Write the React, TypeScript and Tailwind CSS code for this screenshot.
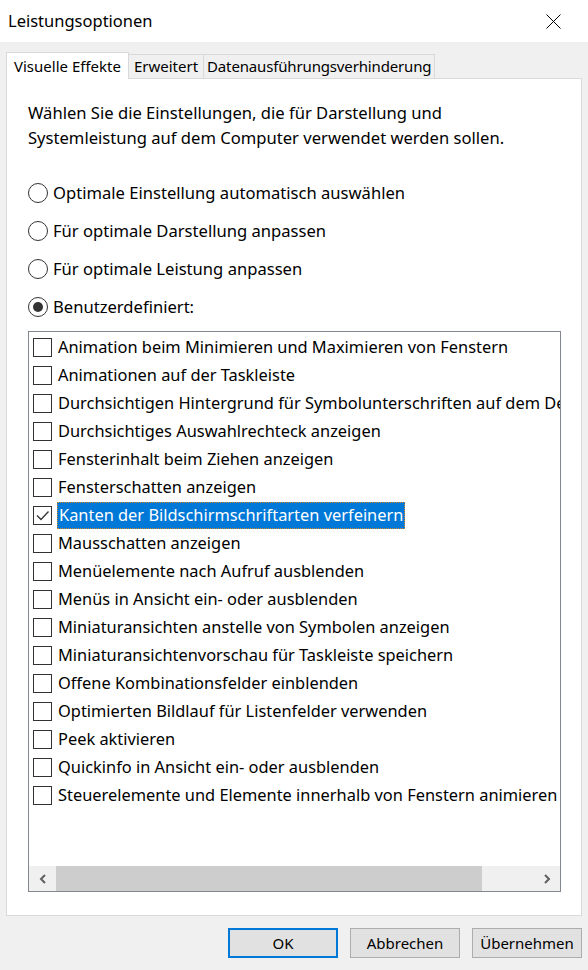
import React from 'react';

const effects: string[] = [
  'Animation beim Minimieren und Maximieren von Fenstern',
  'Animationen auf der Taskleiste',
  'Durchsichtigen Hintergrund für Symbolunterschriften auf dem Desktop',
  'Durchsichtiges Auswahlrechteck anzeigen',
  'Fensterinhalt beim Ziehen anzeigen',
  'Fensterschatten anzeigen',
  'Kanten der Bildschirmschriftarten verfeinern',
  'Mausschatten anzeigen',
  'Menüelemente nach Aufruf ausblenden',
  'Menüs in Ansicht ein- oder ausblenden',
  'Miniaturansichten anstelle von Symbolen anzeigen',
  'Miniaturansichtenvorschau für Taskleiste speichern',
  'Offene Kombinationsfelder einblenden',
  'Optimierten Bildlauf für Listenfelder verwenden',
  'Peek aktivieren',
  'Quickinfo in Ansicht ein- oder ausblenden',
  'Steuerelemente und Elemente innerhalb von Fenstern animieren',
];

const radios = [
  { label: 'Optimale Einstellung automatisch auswählen', on: false },
  { label: 'Für optimale Darstellung anpassen', on: false },
  { label: 'Für optimale Leistung anpassen', on: false },
  { label: 'Benutzerdefiniert:', on: true },
];

const Radio = ({ on }: { on: boolean }) => (
  <div className="w-[20px] h-[20px] shrink-0 rounded-full border border-[#333] bg-white flex items-center justify-center">
    {on && <div className="w-[10px] h-[10px] rounded-full bg-[#333]" />}
  </div>
);

const Checkbox = ({ checked }: { checked: boolean }) => (
  <div className="w-[19px] h-[19px] shrink-0 border border-[#333] bg-white flex items-center justify-center">
    {checked && (
      <svg width="15" height="15" viewBox="0 0 15 15">
        <polyline points="2,7.5 6,11.5 13.5,3.5" fill="none" stroke="#333" strokeWidth="1.3" />
      </svg>
    )}
  </div>
);

const Chevron = ({ dir }: { dir: 'left' | 'right' }) => (
  <svg width="10" height="10" viewBox="0 0 10 10">
    <polyline
      points={dir === 'left' ? '7,1 3,5 7,9' : '3,1 7,5 3,9'}
      fill="none"
      stroke="#606060"
      strokeWidth="2"
    />
  </svg>
);

export default function App() {
  return (
    <div className="w-[588px] h-[970px] bg-[#f0f0f0] text-[15px] text-black font-['Noto_Sans',sans-serif] flex flex-col overflow-hidden">
      {/* Title bar */}
      <div className="h-[42px] bg-white flex items-center justify-between pl-[8px] pr-[27px] shrink-0">
        <span className="text-[16.5px]">Leistungsoptionen</span>
        <svg width="15" height="15" viewBox="0 0 15 15">
          <path d="M0.5 0.5 L14.5 14.5 M14.5 0.5 L0.5 14.5" stroke="#000" strokeWidth="1" fill="none" />
        </svg>
      </div>

      {/* Tabs */}
      <div className="relative z-10 mt-[10px] -mb-px h-[27px] px-[6px] flex items-end shrink-0">
        <div className="h-[27px] px-[7px] bg-white border border-b-0 border-[#d9d9d9] flex items-center">
          Visuelle Effekte
        </div>
        <div className="h-[24px] mb-px px-[5px] border border-b-0 border-l-0 border-[#d9d9d9] flex items-center">
          Erweitert
        </div>
        <div className="h-[24px] mb-px px-[3px] border border-b-0 border-l-0 border-[#d9d9d9] flex items-center tracking-[-0.15px]">
          Datenausführungsverhinderung
        </div>
      </div>

      {/* Tab panel */}
      <div className="mx-[6px] h-[838px] shrink-0 bg-white border border-[#d9d9d9] px-[21px] pt-[21px] flex flex-col text-[16.6px]">
        <p className="leading-[25px] whitespace-nowrap">
          Wählen Sie die Einstellungen, die für Darstellung und
          <br />
          Systemleistung auf dem Computer verwendet werden sollen.
        </p>

        <div className="mt-[24px] flex flex-col">
          {radios.map((r) => (
            <div key={r.label} className="h-[38px] flex items-center">
              <Radio on={r.on} />
              <span className="ml-[5px]">{r.label}</span>
            </div>
          ))}
        </div>

        {/* List box */}
        <div className="mt-[5px] w-[533px] h-[561px] shrink-0 border border-[#828790] flex flex-col overflow-hidden text-[16.4px]">
          <div className="flex-1 pt-px overflow-hidden">
            {effects.map((e, i) => {
              const selected = i === 6;
              return (
                <div key={e} className="h-[28px] flex items-center pl-[4px] whitespace-nowrap">
                  <Checkbox checked={selected} />
                  <span
                    className={
                      selected
                        ? 'ml-[5px] h-[27px] px-px flex items-center bg-[#0078d7] text-white border border-dotted border-[#d08a2a]'
                        : 'ml-[6px]'
                    }
                  >
                    {e}
                  </span>
                </div>
              );
            })}
          </div>

          {/* Horizontal scrollbar */}
          <div className="h-[25px] shrink-0 bg-[#f0f0f0] flex">
            <div className="w-[27px] flex items-center justify-center">
              <Chevron dir="left" />
            </div>
            <div className="w-[426px] bg-[#cdcdcd]" />
            <div className="flex-1" />
            <div className="w-[27px] flex items-center justify-center">
              <Chevron dir="right" />
            </div>
          </div>
        </div>
      </div>

      {/* Buttons */}
      <div className="mt-[12px] pr-[6px] flex justify-end gap-3 shrink-0">
        <button className="w-[110px] h-[30px] bg-[#e1e1e1] border-2 border-[#0078d7]">OK</button>
        <button className="w-[110px] h-[30px] bg-[#e1e1e1] border border-[#adadad]">Abbrechen</button>
        <button className="w-[110px] h-[30px] bg-[#e1e1e1] border border-[#adadad]">Übernehmen</button>
      </div>
    </div>
  );
}
